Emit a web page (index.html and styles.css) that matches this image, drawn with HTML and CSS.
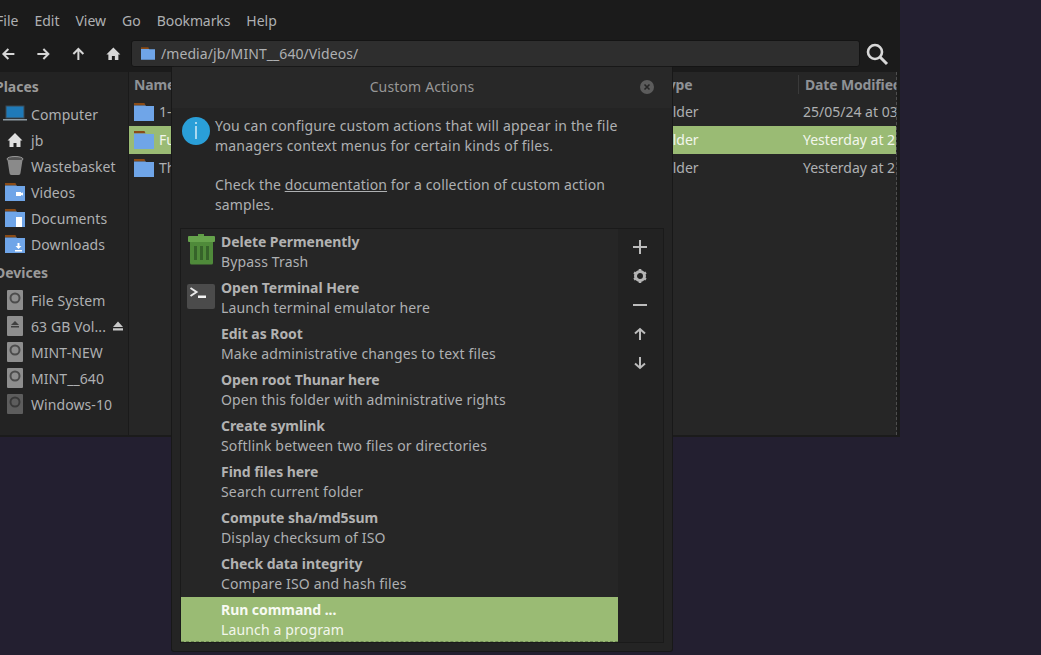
FILE: index.html
```html
<!DOCTYPE html>
<html lang="en">
<head>
    <meta charset="UTF-8">
    <meta name="viewport" content="width=device-width, initial-scale=1.0">
    <title>Custom Actions</title>
    <link rel="stylesheet" href="styles.css">
</head>
<body>

    <svg class="defs" width="0" height="0">
        <symbol id="folder" viewBox="0 0 20 18">
            <path d="M0 0h10.500l1 2.500H0z" fill="#8a4b16"/>
            <path d="M0 2.500h11.500l.5 .5h8v15H0z" fill="#6fa5e8"/>
        </symbol>
        <symbol id="drive" viewBox="0 0 16 20">
            <rect width="16" height="20" rx="1" fill="#8e8e8e"/>
            <circle cx="8" cy="8" r="4.500" fill="none" stroke="#4c4c4c" stroke-width="2"/>
        </symbol>
    </svg>

    <!-- Ventana del gestor de archivos -->
    <div class="window">
        <div class="menubar">
            <span>File</span>
            <span>Edit</span>
            <span>View</span>
            <span>Go</span>
            <span class="menu-long">Bookmarks</span>
            <span>Help</span>
        </div>

        <div class="toolbar">
            <div class="nav-buttons">
                <svg width="35" height="16" viewBox="0 0 16 16"><path d="M14 8H3M8 3 3 8l5 5" class="nav-stroke"/></svg>
                <svg width="35" height="16" viewBox="0 0 16 16"><path d="M2 8h11M8 3l5 5-5 5" class="nav-stroke"/></svg>
                <svg width="35" height="16" viewBox="0 0 16 16"><path d="M8 14V3M3 8l5-5 5 5" class="nav-stroke"/></svg>
                <svg class="nav-home" width="35" height="16" viewBox="0 0 16 16"><path d="M8 1.500 1 8.500h2V14h3.500v-4h3v4H13V8.500h2z" fill="#d6d6d6"/></svg>
            </div>
            <div class="pathbar">
                <svg class="path-icon" width="14" height="13"><use href="#folder"/></svg>
                <span>/media/jb/MINT__640/Videos/</span>
            </div>
            <svg class="search-icon" width="24" height="24" viewBox="0 0 24 24"><circle cx="10" cy="10" r="7" fill="none" stroke="#d8d8d8" stroke-width="2.600"/><path d="m15 15 7 7" stroke="#d8d8d8" stroke-width="3"/></svg>
        </div>

        <div class="content">
            <div class="sidebar">
                <div class="side-title">Places</div>
                <div class="side-row">
                    <svg class="side-icon" width="24" height="18" viewBox="0 0 24 18"><rect x="3" y="1" width="18" height="12" fill="#1f7ab8" stroke="#3c4a55"/><path d="M0 14h24v1.500H0z" fill="#8c9aa3"/></svg>
                    <span>Computer</span>
                </div>
                <div class="side-row">
                    <svg class="side-icon" width="24" height="16" viewBox="0 0 24 16"><path d="M12 1 4.500 8.500h2V15h4v-4h3v4h4V8.500h2z" fill="#e0e0e0"/></svg>
                    <span>jb</span>
                </div>
                <div class="side-row">
                    <svg class="side-icon" width="24" height="20" viewBox="0 0 24 20"><ellipse cx="12" cy="3" rx="8" ry="2.500" fill="#555" stroke="#999"/><path d="M4.500 4 6.500 17a2 2 0 0 0 2 2h7a2 2 0 0 0 2-2l2-13z" fill="#8a8a8a"/></svg>
                    <span>Wastebasket</span>
                </div>
                <div class="side-row">
                    <svg class="side-icon" width="24" height="20" viewBox="0 0 24 20"><use href="#folder" x="2" y="1" width="20" height="18"/><path d="M13 10h5v4h-5zM18 11l2-.5v3l-2-.5z" fill="#fff"/></svg>
                    <span>Videos</span>
                </div>
                <div class="side-row">
                    <svg class="side-icon" width="24" height="20" viewBox="0 0 24 20"><use href="#folder" x="2" y="1" width="20" height="18"/><path d="M13 9h6v10h-6z" fill="#fff"/></svg>
                    <span>Documents</span>
                </div>
                <div class="side-row">
                    <svg class="side-icon" width="24" height="20" viewBox="0 0 24 20"><use href="#folder" x="2" y="1" width="20" height="18"/><path d="M14.500 9h2v3h2l-3 3-3-3h2zM12 16h7v1.500h-7z" fill="#fff"/></svg>
                    <span>Downloads</span>
                </div>
                <div class="side-title devices-title">Devices</div>
                <div class="side-row">
                    <svg class="side-icon" width="24" height="20"><use href="#drive" x="4" width="16" height="20"/></svg>
                    <span>File System</span>
                </div>
                <div class="side-row">
                    <svg class="side-icon" width="24" height="20" viewBox="0 0 24 20"><rect x="4" width="16" height="20" rx="1" fill="#8e8e8e"/><path d="m12 5-4 4h8zM8 10h8v1.500H8z" fill="#3f3f3f"/></svg>
                    <span>63 GB Vol...</span>
                    <svg class="eject" width="10" height="10" viewBox="0 0 11 10"><path d="M5.500 0 11 6H0zM0 7.500h11V10H0z" fill="#c8c8c8"/></svg>
                </div>
                <div class="side-row">
                    <svg class="side-icon" width="24" height="20"><use href="#drive" x="4" width="16" height="20"/></svg>
                    <span>MINT-NEW</span>
                </div>
                <div class="side-row">
                    <svg class="side-icon" width="24" height="20"><use href="#drive" x="4" width="16" height="20"/></svg>
                    <span>MINT__640</span>
                </div>
                <div class="side-row">
                    <svg class="side-icon dim" width="24" height="20"><use href="#drive" x="4" width="16" height="20"/></svg>
                    <span>Windows-10</span>
                </div>
            </div>

            <div class="files">
                <div class="file-head">
                    <span class="col-name">Name</span>
                    <span class="col-type">Type</span>
                    <span class="col-date head-date">Date Modified</span>
                </div>
                <div class="file-row">
                    <span class="col-name"><svg width="20" height="18"><use href="#folder"/></svg>1-</span>
                    <span class="col-type">Folder</span>
                    <span class="col-date">25/05/24 at 03:12</span>
                </div>
                <div class="file-row selected">
                    <span class="col-name"><svg width="20" height="18"><use href="#folder"/></svg>Fu</span>
                    <span class="col-type">Folder</span>
                    <span class="col-date">Yesterday at 21:40</span>
                </div>
                <div class="file-row">
                    <span class="col-name"><svg width="20" height="18"><use href="#folder"/></svg>Th</span>
                    <span class="col-type">Folder</span>
                    <span class="col-date">Yesterday at 21:44</span>
                </div>
            </div>
        </div>
    </div>

    <!-- Dialogo Custom Actions -->
    <div class="dialog">
        <div class="dialog-head">
            <span>Custom Actions</span>
            <svg class="close" width="14" height="14" viewBox="0 0 14 14"><circle cx="7" cy="7" r="7" fill="#5c5c5c"/><path d="m4.500 4.500 5 5m0-5-5 5" stroke="#262626" stroke-width="1.600"/></svg>
        </div>

        <div class="intro">
            <svg class="info" width="28" height="28" viewBox="0 0 28 28"><circle cx="14" cy="14" r="14" fill="#2a9fd8"/><path d="M13.400 9h1.200v13h-1.200zM13.400 5h1.200v2h-1.200z" fill="#fff"/></svg>
            <div class="intro-text">
                <p>You can configure custom actions that will appear in the file managers context menus for certain kinds of files.</p>
                <p class="intro-docs">Check the <u>documentation</u> for a collection of custom action samples.</p>
            </div>
        </div>

        <div class="actions">
            <div class="action-list">
                <div class="action">
                    <svg class="action-icon" width="30" height="32" viewBox="0 0 30 32"><rect x="12" y="0" width="6" height="3" fill="#5f9c46"/><rect x="2" y="2" width="27" height="6" rx="1" fill="#66a34c"/><path d="M4 8h23v21a1.500 1.500 0 0 1-1.500 1.500h-20A1.500 1.500 0 0 1 4 29z" fill="#4f8a3a"/><path d="M9.500 12v14M15.500 12v14M21.500 12v14" stroke="#36632a" stroke-width="3"/></svg>
                    <b>Delete Permenently</b>
                    <span>Bypass Trash</span>
                </div>
                <div class="action">
                    <svg class="action-icon" width="30" height="32" viewBox="0 0 30 32"><rect x="1" y="4" width="28" height="25" rx="2" fill="#4b4b4b"/><path d="m4.500 8 6 4-6 4" fill="none" stroke="#e8e8e8" stroke-width="2"/><path d="M12 15.500h8v2.500h-8z" fill="#f4f4f4"/></svg>
                    <b>Open Terminal Here</b>
                    <span>Launch terminal emulator here</span>
                </div>
                <div class="action">
                    <b>Edit as Root</b>
                    <span>Make administrative changes to text files</span>
                </div>
                <div class="action">
                    <b>Open root Thunar here</b>
                    <span>Open this folder with administrative rights</span>
                </div>
                <div class="action">
                    <b>Create symlink</b>
                    <span>Softlink between two files or directories</span>
                </div>
                <div class="action">
                    <b>Find files here</b>
                    <span>Search current folder</span>
                </div>
                <div class="action">
                    <b>Compute sha/md5sum</b>
                    <span>Display checksum of ISO</span>
                </div>
                <div class="action">
                    <b>Check data integrity</b>
                    <span>Compare ISO and hash files</span>
                </div>
                <div class="action active">
                    <b>Run command ...</b>
                    <span>Launch a program</span>
                </div>
            </div>
            <div class="action-tools">
                <svg width="16" height="16" viewBox="0 0 16 16"><path d="M8 1v14M1 8h14" class="tool-stroke"/></svg>
                <svg width="16" height="16" viewBox="0 0 16 16"><circle cx="8" cy="8" r="4.500" fill="none" stroke="#b4b4b4" stroke-width="3"/><path d="M8 1v3M8 12v3M2 4.500l2.500 1.500M11.500 10l2.500 1.500M2 11.500 4.500 10M11.500 6 14 4.500" stroke="#b4b4b4" stroke-width="2.600"/></svg>
                <svg width="16" height="16" viewBox="0 0 16 16"><path d="M1 8h14" class="tool-stroke"/></svg>
                <svg width="16" height="16" viewBox="0 0 16 16"><path d="M8 14V3M3 7.500 8 3l5 4.500" class="tool-stroke"/></svg>
                <svg width="16" height="16" viewBox="0 0 16 16"><path d="M8 2v11M3 8.500 8 13l5-4.500" class="tool-stroke"/></svg>
            </div>
        </div>
    </div>

</body>
</html>
```

FILE: styles.css
```css
html, body {
    height: 100%;
}

body {
    margin: 0;
    background: #231f30;
    font-family: "Noto Sans", sans-serif;
    font-size: 14px;
    color: #aeb0b2;
    overflow: hidden;
}

.defs {
    position: absolute;
}

/* Ventana */
.window {
    position: absolute;
    top: 0;
    left: -8px;
    width: 908px;
    height: 437px;
    background: #1b1b1b;
    display: flex;
    flex-direction: column;
    overflow: hidden;
}

.menubar {
    display: flex;
    height: 41px;
    align-items: center;
    margin-left: -4px;
}

.menubar span {
    padding: 0 8px;
}

.menubar .menu-long {
    letter-spacing: -0.1px;
}

.toolbar {
    display: flex;
    align-items: center;
    height: 31px;
    margin: -3px 0 3px;
}

.nav-buttons {
    display: flex;
    flex: none;
    width: 140px;
    margin-left: -1px;
}

.nav-home {
    margin-left: 1px;
}

.nav-stroke {
    fill: none;
    stroke: #d6d6d6;
    stroke-width: 2;
}

.pathbar {
    flex: none;
    width: 718px;
    height: 25px;
    margin-right: 5px;
    border: 1px solid #141414;
    border-radius: 3px;
    background: #2e2e2e;
    display: flex;
    align-items: center;
    gap: 6px;
    padding-left: 9px;
    letter-spacing: 0.07px;
}

.search-icon {
    flex: none;
}

.content {
    display: flex;
    height: 363px;
    margin-right: 3px;
}

/* Panel lateral */
.sidebar {
    width: 136px;
    flex: none;
    background: #232323;
    border-right: 1px solid #1a1a1a;
    letter-spacing: 0.08px;
}

.side-title {
    height: 29px;
    line-height: 30px;
    padding-left: 3px;
    font-weight: bold;
    color: #9a9a9a;
    letter-spacing: 0;
}

.devices-title {
    height: 28px;
    line-height: 28px;
    margin-top: 2px;
}

.side-row {
    display: flex;
    align-items: center;
    height: 26px;
    padding-left: 11px;
}

.side-icon {
    flex: none;
    margin-right: 4px;
}

.side-icon.dim {
    opacity: 0.55;
}

.eject {
    margin-left: 7px;
}

/* Lista de archivos */
.files {
    flex: 1;
    background: #262626;
    border-right: 1px dashed #4e4e4e;
    overflow: hidden;
}

.file-head, .file-row {
    display: flex;
    align-items: center;
    white-space: nowrap;
    box-sizing: border-box;
    padding-bottom: 1px;
}

.file-head {
    height: 26px;
    font-weight: bold;
    color: #8f9296;
    letter-spacing: -0.15px;
}

.file-row {
    height: 28px;
}

.file-row.selected {
    background: #9abb74;
    color: #f2f6ec;
}

.col-name {
    width: 525px;
    flex: none;
    padding-left: 5px;
    box-sizing: border-box;
    display: flex;
    align-items: center;
    gap: 5px;
}

.col-type {
    width: 144px;
    flex: none;
    padding-left: 3px;
    box-sizing: border-box;
}

.file-head .col-name {
    width: 528px;
}

.file-head .col-type {
    width: 141px;
}

.col-date {
    padding-left: 5px;
}

.head-date {
    border-left: 1px solid #3a3a3a;
    padding-left: 6px;
}

/* Dialogo */
.dialog {
    position: absolute;
    top: 67px;
    left: 172px;
    width: 500px;
    height: 584px;
    background: #242424;
    box-shadow: 0 0 0 1px #181818;
    border-radius: 2px;
    display: flex;
    flex-direction: column;
}

.dialog-head {
    position: relative;
    height: 39px;
    padding-bottom: 2px;
    flex: none;
    background: #282828;
    display: flex;
    align-items: center;
    justify-content: center;
    color: #979797;
    letter-spacing: 0.15px;
}

.close {
    position: absolute;
    top: 13px;
    right: 18px;
}

.intro {
    display: flex;
    height: 121px;
    flex: none;
    padding: 8px 0 0 10px;
    box-sizing: border-box;
    gap: 5px;
}

.info {
    flex: none;
    margin-top: 1px;
}

.intro-text {
    width: 410px;
    line-height: 20px;
    letter-spacing: 0.18px;
}

.intro-text p {
    margin: 0 0 19px;
}

.intro-text .intro-docs {
    letter-spacing: 0.12px;
}

.actions {
    display: flex;
    width: 482px;
    height: 413px;
    margin-left: 9px;
    box-shadow: 0 0 0 1px #1a1a1a;
    background: #222;
    overflow: hidden;
}

.action-list {
    width: 437px;
    flex: none;
    background: #262626;
}

.action {
    position: relative;
    height: 46px;
    padding: 3px 0 0 40px;
    box-sizing: border-box;
    display: flex;
    flex-direction: column;
    line-height: 20px;
    letter-spacing: 0.15px;
}

.action b {
    color: #b2b2b2;
    letter-spacing: -0.05px;
}

.action-icon {
    position: absolute;
    left: 5px;
    top: 5px;
}

.action.active {
    height: 45px;
    background: #9abb74;
    color: #f2f6ec;
    border-bottom: 1px dashed #6f8a54;
}

.action.active b {
    color: #f7faf2;
}

.action-tools {
    flex: 1;
    display: flex;
    flex-direction: column;
    align-items: center;
    gap: 13px;
    padding: 10px 2px 0 0;
}

.tool-stroke {
    fill: none;
    stroke: #bcbcbc;
    stroke-width: 2;
}
```
